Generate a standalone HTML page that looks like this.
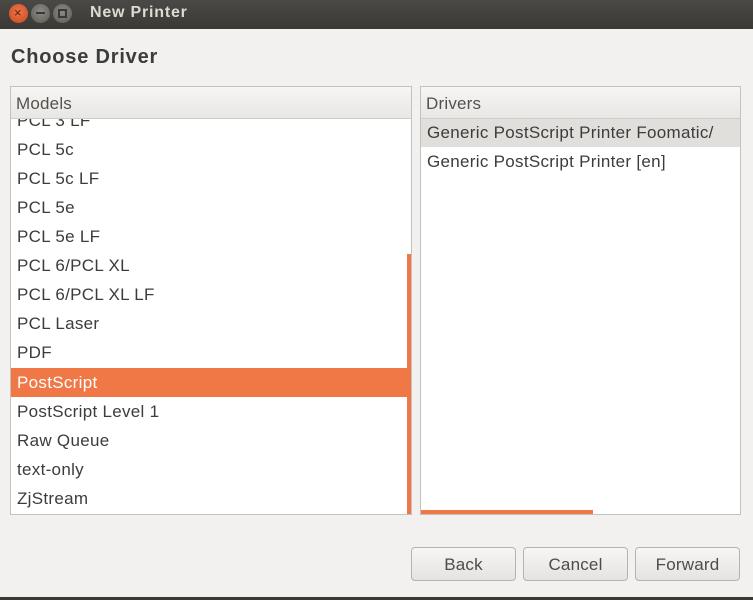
<!DOCTYPE html>
<html><head><style>
*{margin:0;padding:0;box-sizing:border-box}
body{width:753px;height:600px;background:#f2f1f0;font-family:"Liberation Sans",sans-serif;color:#3c3c3c;position:relative;overflow:hidden}
.tb{position:absolute;left:0;top:0;width:753px;height:29px;background:linear-gradient(#4a4945,#3a3935);}
.tb .t{position:absolute;left:90px;top:4px;font-size:16px;font-weight:bold;color:#dfdbd2;letter-spacing:0.8px}
.c{position:absolute;top:4px;width:19px;height:19px;border-radius:50%;}
h1{position:absolute;left:11px;top:46px;font-size:20px;font-weight:bold;color:#3c3c3c;letter-spacing:0.8px}
.box{position:absolute;top:86px;height:429px;background:#fff;border:1px solid #c4c2bd;overflow:hidden}
.hd{position:absolute;left:0;top:0;right:0;height:32px;background:linear-gradient(#f6f5f4,#e8e7e5);border-bottom:1px solid #cfcdc8;font-size:17px;color:#55524c;padding:7px 0 0 5px;letter-spacing:0.2px}
.row{position:absolute;left:0;right:0;height:29px;font-size:17px;padding:5px 0 0 6px;color:#3c3c3c;letter-spacing:0.3px;white-space:nowrap}
.btn{position:absolute;top:547px;width:105px;height:34px;border:1px solid #b5b3ae;border-radius:4px;background:linear-gradient(#f7f6f5,#e4e3e0);font-size:17px;text-align:center;padding-top:7px;color:#4c4c4c;letter-spacing:0.2px}
</style></head><body>
<div class="tb">
<div class="c" style="left:9px;background:radial-gradient(circle at 50% 40%,#f0734a,#c94a1f)"><span style="position:absolute;left:5px;top:1px;font-size:13px;color:#5a2010">×</span></div>
<div class="c" style="left:31px;background:radial-gradient(circle at 50% 40%,#8b8a85,#5c5b56)"><span style="position:absolute;left:5px;top:8px;width:9px;height:2px;background:#3a3935"></span></div>
<div class="c" style="left:53px;background:radial-gradient(circle at 50% 40%,#8b8a85,#5c5b56)"><span style="position:absolute;left:5px;top:5px;width:9px;height:9px;border:2px solid #3a3935"></span></div>
<div class="t">New Printer</div>
</div>
<h1>Choose Driver</h1>
<div class="box" style="left:10px;width:402px">
<div class="row" style="top:19px">PCL 3 LF</div>
<div class="row" style="top:48px">PCL 5c</div>
<div class="row" style="top:77px">PCL 5c LF</div>
<div class="row" style="top:106px">PCL 5e</div>
<div class="row" style="top:135px">PCL 5e LF</div>
<div class="row" style="top:164px">PCL 6/PCL XL</div>
<div class="row" style="top:193px">PCL 6/PCL XL LF</div>
<div class="row" style="top:222px">PCL Laser</div>
<div class="row" style="top:251px">PDF</div>
<div class="row" style="top:281px;background:#f07746;color:#fff">PostScript</div>
<div class="row" style="top:310px">PostScript Level 1</div>
<div class="row" style="top:339px">Raw Queue</div>
<div class="row" style="top:368px">text-only</div>
<div class="row" style="top:397px">ZjStream</div>
<div class="hd">Models</div>
<div style="position:absolute;left:396px;top:167px;width:4px;height:262px;background:#f07746"></div>
</div>
<div class="box" style="left:420px;width:321px">
<div class="row" style="top:31px;background:#e0dfdb">Generic PostScript Printer Foomatic/</div>
<div class="row" style="top:60px">Generic PostScript Printer [en]</div>
<div class="hd">Drivers</div>
<div style="position:absolute;left:0;top:423px;width:172px;height:4px;background:#f07746"></div>
</div>
<div class="btn" style="left:411px">Back</div>
<div class="btn" style="left:523px">Cancel</div>
<div class="btn" style="left:635px">Forward</div>
<div style="position:absolute;left:0;top:597px;width:753px;height:3px;background:#3a3935"></div>
</body></html>
